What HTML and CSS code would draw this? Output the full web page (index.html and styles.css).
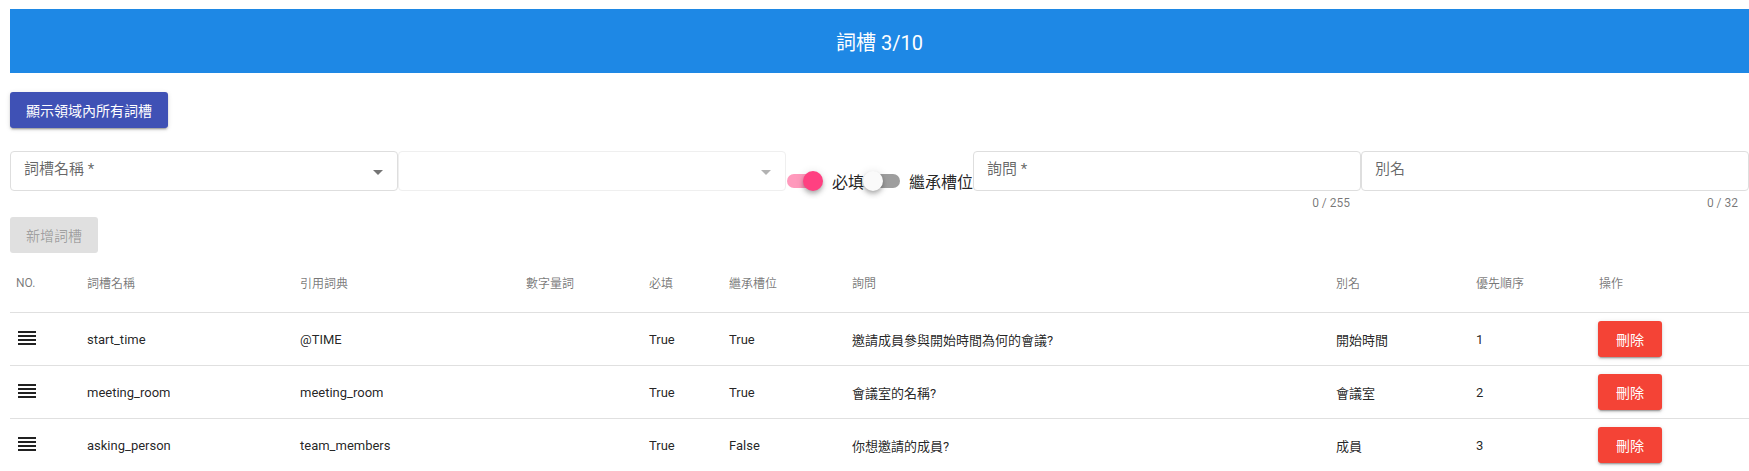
FILE: index.html
```html
<!DOCTYPE html>
<html lang="zh-Hant">
<head>
<meta charset="utf-8">
<title>詞槽</title>
<link rel="stylesheet" href="styles.css">
</head>
<body>
<div class="page">
  <header class="topbar">詞槽 3/10</header>

  <div class="actions">
    <button class="btn btn-primary" type="button">顯示領域內所有詞槽</button>
  </div>

  <div class="form-row">
    <div class="field">
      <div class="box">
        <span class="box-label">詞槽名稱 *</span>
        <span class="arrow"></span>
      </div>
      <div class="details"></div>
    </div>
    <div class="field">
      <div class="box box-muted">
        <span class="box-label"></span>
        <span class="arrow arrow-muted"></span>
      </div>
      <div class="details"></div>
    </div>
    <div class="switches">
      <div class="switch switch-on">
        <span class="track"><span class="thumb"></span></span>
        <span class="switch-label">必填</span>
      </div>
      <div class="switch switch-off">
        <span class="track"><span class="thumb"></span></span>
        <span class="switch-label">繼承槽位</span>
      </div>
    </div>
    <div class="field">
      <div class="box">
        <span class="box-label">詢問 *</span>
      </div>
      <div class="details"><span class="counter">0 / 255</span></div>
    </div>
    <div class="field">
      <div class="box">
        <span class="box-label">別名</span>
      </div>
      <div class="details"><span class="counter">0 / 32</span></div>
    </div>
  </div>

  <div class="actions2">
    <button class="btn btn-disabled" type="button">新增詞槽</button>
  </div>

  <table class="slots">
    <colgroup>
      <col class="w-no"><col class="w-name"><col class="w-dict"><col class="w-num"><col class="w-req">
      <col class="w-inh"><col class="w-ask"><col class="w-alias"><col class="w-prio"><col class="w-op">
    </colgroup>
    <thead>
      <tr>
        <th>NO.</th><th>詞槽名稱</th><th>引用詞典</th><th>數字量詞</th><th>必填</th>
        <th>繼承槽位</th><th>詢問</th><th>別名</th><th>優先順序</th><th>操作</th>
      </tr>
    </thead>
    <tbody>
      <tr>
        <td><svg class="drag" viewBox="0 0 24 24" width="24" height="24"><path d="M3 15h18v-2H3v2zm0 4h18v-2H3v2zm0-8h18V9H3v2zm0-6v2h18V5H3z"/></svg></td>
        <td>start_time</td><td>@TIME</td><td></td><td>True</td><td>True</td>
        <td>邀請成員參與開始時間為何的會議?</td><td>開始時間</td><td>1</td>
        <td><button class="btn btn-danger" type="button">刪除</button></td>
      </tr>
      <tr>
        <td><svg class="drag" viewBox="0 0 24 24" width="24" height="24"><path d="M3 15h18v-2H3v2zm0 4h18v-2H3v2zm0-8h18V9H3v2zm0-6v2h18V5H3z"/></svg></td>
        <td>meeting_room</td><td>meeting_room</td><td></td><td>True</td><td>True</td>
        <td>會議室的名稱?</td><td>會議室</td><td>2</td>
        <td><button class="btn btn-danger" type="button">刪除</button></td>
      </tr>
      <tr>
        <td><svg class="drag" viewBox="0 0 24 24" width="24" height="24"><path d="M3 15h18v-2H3v2zm0 4h18v-2H3v2zm0-8h18V9H3v2zm0-6v2h18V5H3z"/></svg></td>
        <td>asking_person</td><td>team_members</td><td></td><td>True</td><td>False</td>
        <td>你想邀請的成員?</td><td>成員</td><td>3</td>
        <td><button class="btn btn-danger" type="button">刪除</button></td>
      </tr>
    </tbody>
  </table>
</div>
</body>
</html>
```

FILE: styles.css
```css
html, body {
  margin: 0;
  padding: 0;
  background: #ffffff;
}

body {
  font-family: Roboto, "Noto Sans CJK TC", "Noto Sans", sans-serif;
  color: rgba(0, 0, 0, 0.87);
  overflow: hidden;
}

.page {
  padding: 9px 0 0 10px;
}

.topbar {
  height: 64px;
  background: #1e88e5;
  color: #ffffff;
  font-size: 20px;
  display: flex;
  align-items: center;
  justify-content: center;
}

.actions {
  margin-top: 19px;
  display: flex;
}

.btn {
  font-family: Roboto, "Noto Sans CJK TC", sans-serif;
  font-size: 14px;
  height: 36px;
  padding: 0 16px;
  border: none;
  border-radius: 3px;
  cursor: pointer;
  display: inline-flex;
  align-items: center;
  justify-content: center;
}

.btn-primary {
  background: #3f51b5;
  color: #ffffff;
  box-shadow: 0 3px 1px -2px rgba(0,0,0,.2), 0 2px 2px 0 rgba(0,0,0,.14), 0 1px 5px 0 rgba(0,0,0,.12);
}

.btn-disabled {
  background: #e0e0e0;
  color: rgba(0, 0, 0, 0.3);
  min-width: 88px;
}

.btn-danger {
  background: #f44336;
  color: #ffffff;
  min-width: 64px;
  box-shadow: 0 3px 1px -2px rgba(0,0,0,.2), 0 2px 2px 0 rgba(0,0,0,.14), 0 1px 5px 0 rgba(0,0,0,.12);
}

/* form row */
.form-row {
  margin-top: 23px;
  display: flex;
  align-items: center;
}

.field {
  flex: 1 1 0;
  min-width: 0;
  display: flex;
  flex-direction: column;
}

.box {
  height: 40px;
  box-sizing: border-box;
  border: 1px solid #dedede;
  border-radius: 4px;
  display: flex;
  align-items: flex-start;
  padding: 7px 14px 0 13px;
  position: relative;
}

.box-muted {
  border-color: #efefef;
}

.box-label {
  flex: 1;
  font-size: 15px;
  line-height: 20px;
  color: rgba(0, 0, 0, 0.6);
}

.arrow {
  width: 0;
  height: 0;
  margin-top: 11px;
  border-left: 5px solid transparent;
  border-right: 5px solid transparent;
  border-top: 5px solid rgba(0, 0, 0, 0.54);
}

.arrow-muted {
  border-top-color: rgba(0, 0, 0, 0.3);
}

.details {
  height: 20px;
  display: flex;
  justify-content: flex-end;
  align-items: flex-end;
  padding-right: 11px;
}

.counter {
  font-size: 12px;
  line-height: 14px;
  color: rgba(0, 0, 0, 0.54);
  margin-bottom: 1px;
}

.switches {
  display: flex;
  align-items: center;
  padding-left: 1px;
}

.switch {
  display: flex;
  align-items: center;
}

.switch + .switch {
  margin-left: 2px;
}

.track {
  position: relative;
  width: 34px;
  height: 14px;
  border-radius: 7px;
}

.thumb {
  position: absolute;
  top: -3px;
  width: 20px;
  height: 20px;
  border-radius: 50%;
  box-shadow: 0 2px 4px -1px rgba(0,0,0,.2), 0 4px 5px 0 rgba(0,0,0,.14), 0 1px 10px 0 rgba(0,0,0,.12);
}

.switch-on .track {
  background: #ff99bc;
}

.switch-on .thumb {
  left: 16px;
  background: #ff4081;
}

.switch-off .track {
  background: #9e9e9e;
}

.switch-off .thumb {
  left: -3px;
  background: #fafafa;
}

.switch-label {
  margin-left: 11px;
  font-size: 16px;
  color: rgba(0, 0, 0, 0.87);
  white-space: nowrap;
}

.switch-off .switch-label {
  margin-left: 9px;
}

.actions2 {
  margin-top: 6px;
  display: flex;
}

/* table */
.slots {
  margin-top: 4px;
  width: 1739px;
  table-layout: fixed;
  border-collapse: collapse;
}

.w-no { width: 71px; }
.w-name { width: 213px; }
.w-dict { width: 226px; }
.w-num { width: 123px; }
.w-req { width: 80px; }
.w-inh { width: 123px; }
.w-ask { width: 484px; }
.w-alias { width: 140px; }
.w-prio { width: 123px; }
.w-op { width: 156px; }

.slots th {
  height: 51px;
  padding: 0 0 4px 6px;
  text-align: left;
  font-weight: 400;
  font-size: 12px;
  color: rgba(0, 0, 0, 0.54);
  border-bottom: 1px solid #e0e0e0;
  white-space: nowrap;
}

.slots td {
  height: 52px;
  padding: 0 0 0 6px;
  font-size: 13px;
  color: rgba(0, 0, 0, 0.87);
  border-bottom: 1px solid #e0e0e0;
  white-space: nowrap;
}

.slots td:last-child {
  padding-left: 5px;
}

.drag {
  display: block;
  margin-left: -1px;
  margin-top: -3px;
  fill: #212121;
}
```
